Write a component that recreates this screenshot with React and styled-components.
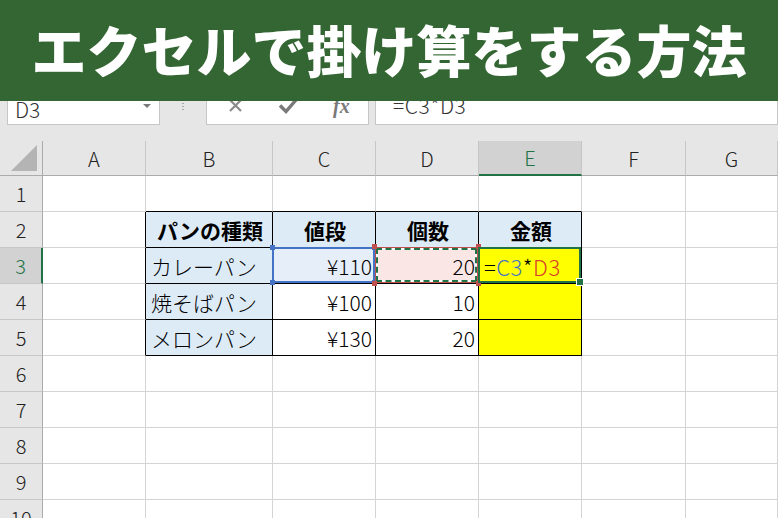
import styled, { createGlobalStyle } from "styled-components";

const Global = createGlobalStyle`
  body {
    margin: 0;
  }
`;

const Page = styled.div`
  width: 778px;
  height: 518px;
  overflow: hidden;
  background: #fff;
  font-family: "Noto Sans CJK JP", "Noto Sans", sans-serif;
`;

const Banner = styled.header`
  height: 101px;
  box-sizing: border-box;
  padding-bottom: 4px;
  background: #336633;
  color: #fff;
  display: flex;
  align-items: center;
  justify-content: center;
  font-size: 55px;
  font-weight: 900;
  line-height: 1;
`;

const Toolbar = styled.div`
  height: 40px;
  background: #e6e6e6;
  display: flex;
  align-items: flex-start;
  padding-left: 7px;
  overflow: hidden;
`;

const Box = styled.div`
  margin-top: -8px;
  height: 32px;
  box-sizing: border-box;
  background: #fff;
  border: 1px solid #c6c6c6;
  display: flex;
`;

const NameBox = styled(Box)`
  width: 153px;
  align-items: center;
  justify-content: space-between;
  padding: 0 8px 0 7px;
  font-size: 21px;
  font-weight: 300;
  color: #333;
`;

const Caret = styled.span`
  align-self: flex-start;
  margin-top: 10px;
  width: 0;
  height: 0;
  border-left: 4px solid transparent;
  border-right: 4px solid transparent;
  border-top: 4px solid #7a7a7a;
`;

const Sep = styled.div`
  width: 46px;
  display: flex;
  justify-content: center;
  padding-top: 2px;
`;

const Dots = styled.span`
  width: 2px;
  height: 8px;
  background: linear-gradient(#a6a6a6 50%, transparent 50%);
  background-size: 2px 3px;
`;

const FxBox = styled(Box)`
  width: 163px;
  align-items: flex-start;
  gap: 35px;
  padding: 4px 0 0 21px;
`;

const Fx = styled.span`
  font-family: "Liberation Serif", serif;
  font-style: italic;
  font-weight: 700;
  font-size: 20px;
  line-height: 16px;
  color: #7a7a7a;
`;

const FormulaBox = styled(Box)`
  flex: 1;
  margin-left: 6px;
  padding-left: 17px;
  align-items: flex-start;
  font-size: 21px;
  font-weight: 300;
  line-height: 22px;
  letter-spacing: 0.5px;
  color: #333;
`;

const Sheet = styled.div`
  display: grid;
  grid-template-columns: 43px 103px 127px 103px 103px 103px 104px 1fr;
  grid-template-rows: 35px;
  grid-auto-rows: 36px;
  font-weight: 300;
`;

const Corner = styled.div`
  box-sizing: border-box;
  background: #e6e6e6;
  border-right: 1px solid #ababab;
  border-bottom: 1px solid #ababab;
  display: flex;
  align-items: flex-end;
  justify-content: flex-end;
  padding: 0 5px 4px 0;
`;

const Triangle = styled.span`
  width: 0;
  height: 0;
  border-left: 26px solid transparent;
  border-bottom: 26px solid #b4b4b4;
`;

const ColHead = styled.div`
  box-sizing: border-box;
  background: ${(p) => (p.$active ? "#d2d2d2" : "#e6e6e6")};
  border-right: 1px solid #c6c6c6;
  border-bottom: ${(p) => (p.$active ? "2px solid #217346" : "1px solid #ababab")};
  display: flex;
  align-items: center;
  justify-content: center;
  font-size: 20px;
  color: ${(p) => (p.$active ? "#217346" : "#222")};
`;

const RowHead = styled.div`
  box-sizing: border-box;
  background: ${(p) => (p.$active ? "#d2d2d2" : "#e6e6e6")};
  border-right: ${(p) => (p.$active ? "2px solid #217346" : "1px solid #ababab")};
  border-bottom: 1px solid #c6c6c6;
  display: flex;
  align-items: center;
  justify-content: center;
  font-size: 20px;
  color: ${(p) => (p.$active ? "#217346" : "#222")};
`;

const Cell = styled.div`
  position: relative;
  box-sizing: border-box;
  background: ${(p) => p.$bg || "#fff"};
  border-right: 1px solid ${(p) => p.$rc || "#d4d4d4"};
  border-bottom: 1px solid ${(p) => p.$bc || "#d4d4d4"};
  display: flex;
  align-items: center;
  justify-content: ${(p) =>
    p.$align === "right" ? "flex-end" : p.$align === "center" ? "center" : "flex-start"};
  padding: 0 3px 0 5px;
  font-size: 21px;
  font-weight: ${(p) => (p.$bold ? 700 : 300)};
  color: #000;
  white-space: nowrap;
`;

const Mark = styled.div`
  position: absolute;
  top: -1px;
  left: -1px;
  right: 0;
  bottom: 0;
  z-index: 2;
  pointer-events: none;
  border: ${(p) =>
    p.$kind === "blue"
      ? "2px solid #4472c4"
      : p.$kind === "red"
      ? "1px solid #c0504d"
      : "2px solid #217346"};
`;

const Dash = styled.div`
  position: absolute;
  inset: 0;
  border: 2px solid #fff;
  outline: 2px dashed #217346;
  outline-offset: -2px;
`;

const Handle = styled.span`
  position: absolute;
  width: ${(p) => p.$s || 5}px;
  height: ${(p) => p.$s || 5}px;
  background: ${(p) => p.$c};
  ${(p) => (p.$x === "r" ? "right: -4px;" : "left: -4px;")}
  ${(p) => (p.$y === "b" ? "bottom: -4px;" : "top: -4px;")}
  ${(p) => (p.$ring ? "outline: 1px solid #fff;" : "")}
`;

const Formula = styled.span`
  font-size: 22px;
  letter-spacing: 0.5px;
`;

const Ref = styled.span`
  color: ${(p) => p.$c};
`;

const XIcon = () => (
  <svg width="15" height="15" viewBox="0 0 15 15">
    <path d="M2 2 L13 13 M13 2 L2 13" stroke="#8c8c8c" strokeWidth="2.2" fill="none" />
  </svg>
);

const CheckIcon = () => (
  <svg width="20" height="16" viewBox="0 0 20 16">
    <path d="M2 7.5 L8 13.5 L18 2" stroke="#7a7a7a" strokeWidth="3.4" fill="none" />
  </svg>
);

const COLS = ["A", "B", "C", "D", "E", "F", "G"];

const DATA = {
  2: { B: "パンの種類", C: "値段", D: "個数", E: "金額" },
  3: { B: "カレーパン", C: "¥110", D: "20" },
  4: { B: "焼そばパン", C: "¥100", D: "10" },
  5: { B: "メロンパン", C: "¥130", D: "20" },
};

const BLUE = "#ddebf7";

function cellProps(r, c) {
  const inTable = r >= 2 && r <= 5 && c >= 1 && c <= 4;
  const props = {};
  if (inTable) {
    props.$rc = "#000";
    props.$bc = "#000";
  }
  if (c === 0 && r >= 2 && r <= 5) props.$rc = "#000";
  if (r === 1 && c >= 1 && c <= 4) props.$bc = "#000";
  if (r === 2 && inTable) {
    props.$bg = BLUE;
    props.$bold = true;
    props.$align = "center";
  }
  if (r >= 3 && r <= 5) {
    if (c === 1) props.$bg = BLUE;
    if (c === 2 || c === 3) props.$align = "right";
    if (c === 4) props.$bg = "#ffff00";
  }
  if (r === 3 && c === 2) props.$bg = "#e6eef9";
  if (r === 3 && c === 3) props.$bg = "#fbe6e6";
  return props;
}

function Overlay({ r, c }) {
  if (r !== 3) return null;
  if (c === 2)
    return (
      <Mark $kind="blue">
        <Handle $c="#4472c4" />
        <Handle $c="#4472c4" $x="r" />
        <Handle $c="#4472c4" $y="b" />
        <Handle $c="#4472c4" $x="r" $y="b" />
      </Mark>
    );
  if (c === 3)
    return (
      <Mark $kind="red">
        <Dash />
        <Handle $c="#c0504d" />
        <Handle $c="#c0504d" $x="r" />
        <Handle $c="#c0504d" $y="b" />
        <Handle $c="#c0504d" $x="r" $y="b" />
      </Mark>
    );
  if (c === 4)
    return (
      <Mark $kind="green">
        <Handle $c="#217346" $s={6} $x="r" $y="b" $ring />
      </Mark>
    );
  return null;
}

export default function App() {
  const rows = Array.from({ length: 10 }, (_, i) => i + 1);
  return (
    <Page>
      <Global />
      <Banner>エクセルで掛け算をする方法</Banner>
      <Toolbar>
        <NameBox>
          D3
          <Caret />
        </NameBox>
        <Sep>
          <Dots />
        </Sep>
        <FxBox>
          <XIcon />
          <CheckIcon />
          <Fx>fx</Fx>
        </FxBox>
        <FormulaBox>=C3*D3</FormulaBox>
      </Toolbar>
      <Sheet>
        <Corner>
          <Triangle />
        </Corner>
        {COLS.map((col) => (
          <ColHead key={col} $active={col === "E"}>
            {col}
          </ColHead>
        ))}
        {rows.map((r) => (
          <div key={r} style={{ display: "contents" }}>
            <RowHead $active={r === 3}>{r}</RowHead>
            {COLS.map((col, c) => (
              <Cell key={c} {...cellProps(r, c)}>
                {r === 3 && c === 4 ? (
                  <Formula>
                    =<Ref $c="#4472c4">C3</Ref>*<Ref $c="#d6402e">D3</Ref>
                  </Formula>
                ) : (
                  (DATA[r] && DATA[r][col]) || ""
                )}
                <Overlay r={r} c={c} />
              </Cell>
            ))}
          </div>
        ))}
      </Sheet>
    </Page>
  );
}
